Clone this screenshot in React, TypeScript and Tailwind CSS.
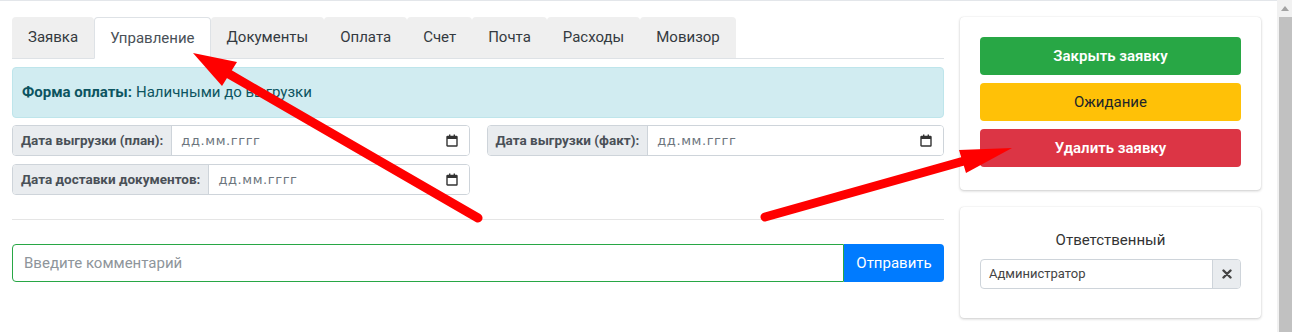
import React from 'react';

const TABS = ['Заявка', 'Управление', 'Документы', 'Оплата', 'Счет', 'Почта', 'Расходы', 'Мовизор'];

// Calendar glyph as drawn by the browser's date input
function CalendarIcon() {
  return (
    <svg width="12" height="13" viewBox="0 0 12 13" className="text-[#333]">
      <rect x="1" y="2.5" width="10" height="9.5" rx="0.5" fill="none" stroke="currentColor" strokeWidth="1.4" />
      <rect x="1" y="2.5" width="10" height="2.5" fill="currentColor" />
      <rect x="3" y="0.5" width="1.4" height="2.5" fill="currentColor" />
      <rect x="7.6" y="0.5" width="1.4" height="2.5" fill="currentColor" />
    </svg>
  );
}

function DateField({ label }: { label: string }) {
  return (
    <div className="flex h-[31px] rounded-[4px] border border-[#ced4da] overflow-hidden">
      <div className="flex items-center px-[8px] bg-[#e9ecef] border-r border-[#ced4da] text-[13.5px] font-bold text-[#495057] whitespace-nowrap">
        {label}
      </div>
      <div className="flex-1 flex items-center justify-between pl-[9px] pr-[11px] bg-white">
        <span className="text-[13px] tracking-[0.6px] text-[#6c757d] font-['DejaVu_Sans',sans-serif]">дд.мм.гггг</span>
        <CalendarIcon />
      </div>
    </div>
  );
}

export default function App() {
  return (
    <div className="relative flex h-[332px] w-[1292px] bg-white overflow-hidden font-['Roboto','Noto_Sans',sans-serif] text-[#212529]">
      <div className="flex-1 flex border-t border-[#e3e6ea] pt-[16px] pl-[12px]">
        {/* Left column */}
        <div className="w-[932px]">
          {/* Tabs */}
          <div className="flex h-[42px] border-b border-[#dee2e6]">
            {TABS.map((t, i) =>
              i === 1 ? (
                <div
                  key={t}
                  className="h-[42px] px-[15px] flex items-center bg-white border border-[#dee2e6] border-b-white rounded-t-[4px] text-[15px] text-[#495057]"
                >
                  {t}
                </div>
              ) : (
                <div
                  key={t}
                  className="h-[41px] px-[16px] flex items-center bg-[#efefef] rounded-t-[4px] text-[15px] text-[#343a40]"
                >
                  {t}
                </div>
              )
            )}
          </div>

          {/* Payment info */}
          <div className="mt-[8px] h-[51px] flex items-center px-[9px] bg-[#d1ecf1] border border-[#bee5eb] rounded-[4px] text-[15px] text-[#0c5460]">
            <span className="font-bold mr-[4px]">Форма оплаты:</span>
            <span>Наличными до выгрузки</span>
          </div>

          {/* Dates */}
          <div className="mt-[7px] grid grid-cols-2 gap-x-[17px] gap-y-[8px]">
            <DateField label="Дата выгрузки (план):" />
            <DateField label="Дата выгрузки (факт):" />
            <DateField label="Дата доставки документов:" />
          </div>

          <div className="mt-[24px] border-t border-[#e5e5e5]" />

          {/* Comment */}
          <div className="mt-[24px] flex h-[38px]">
            <div className="flex-1 flex items-center px-[11px] border border-[#28a745] rounded-l-[4px] text-[15px] text-[#8e959b]">
              Введите комментарий
            </div>
            <button className="w-[100px] bg-[#007bff] rounded-r-[4px] text-white text-[15px]">Отправить</button>
          </div>
        </div>

        {/* Right column */}
        <div className="ml-[16px] w-[301px]">
          <div className="bg-white rounded-[4px] shadow-[0_0_1px_rgba(0,0,0,0.125),0_1px_3px_rgba(0,0,0,0.2)] px-[20px] pt-[20px] pb-[23px] flex flex-col gap-[8px]">
            <button className="h-[38px] rounded-[4px] bg-[#28a745] text-white text-[15px] font-semibold">Закрыть заявку</button>
            <button className="h-[38px] rounded-[4px] bg-[#ffc107] text-[#212529] text-[15px]">Ожидание</button>
            <button className="h-[38px] rounded-[4px] bg-[#dc3545] text-white text-[15px] font-semibold">Удалить заявку</button>
          </div>

          <div className="mt-[17px] bg-white rounded-[4px] shadow-[0_0_1px_rgba(0,0,0,0.125),0_1px_3px_rgba(0,0,0,0.2)] px-[20px] pt-[21px] pb-[29px]">
            <div className="text-center text-[15px] leading-[24px] text-[#333]">Ответственный</div>
            <div className="mt-[7px] flex h-[30px] border border-[#ced4da] rounded-[4px] overflow-hidden">
              <div className="flex-1 flex items-center pl-[8px] text-[13px] text-[#444]">Администратор</div>
              <div className="w-[28px] flex items-center justify-center bg-[#e9ecef] border-l border-[#ced4da]">
                <svg width="10" height="10" viewBox="0 0 10 10">
                  <path d="M1.5 1.5 L8.5 8.5 M8.5 1.5 L1.5 8.5" stroke="#444" strokeWidth="2.4" strokeLinecap="round" />
                </svg>
              </div>
            </div>
          </div>
        </div>
      </div>

      {/* Browser scrollbar */}
      <div className="w-[15px] bg-[#f1f1f1] flex flex-col">
        <div className="h-[17px] flex items-center justify-center">
          <svg width="8" height="5" viewBox="0 0 8 5">
            <path d="M0 5 L4 0 L8 5 Z" fill="#a3a3a3" />
          </svg>
        </div>
        <div className="flex-1 ml-[2px] bg-[#c1c1c1]" />
      </div>

      {/* Annotation arrows */}
      <svg className="absolute inset-0 pointer-events-none" width="1292" height="332" viewBox="0 0 1292 332">
        <line x1="478" y1="218" x2="229" y2="74" stroke="#ff0000" strokeWidth="9" strokeLinecap="round" />
        <polygon points="193,53 237,62 222,86" fill="#ff0000" />
        <line x1="765" y1="217" x2="964" y2="161" stroke="#ff0000" strokeWidth="9" strokeLinecap="round" />
        <polygon points="1012,148 959,150 966,173" fill="#ff0000" />
      </svg>
    </div>
  );
}
